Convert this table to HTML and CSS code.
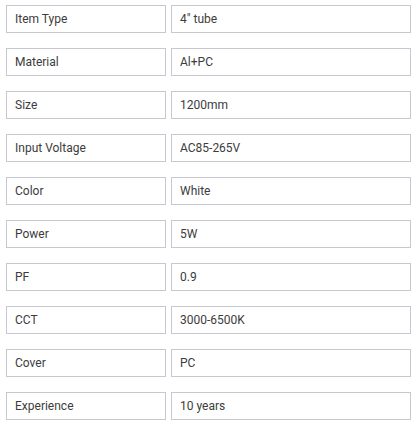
FILE: index.html
```html
<!DOCTYPE html>
<html>
<head>
<meta charset="utf-8">
<link rel="stylesheet" href="styles.css">
</head>
<body>
<div class="specs">
  <div class="cell">Item Type</div><div class="cell">4" tube</div>
  <div class="cell">Material</div><div class="cell">Al+PC</div>
  <div class="cell">Size</div><div class="cell">1200mm</div>
  <div class="cell">Input Voltage</div><div class="cell">AC85-265V</div>
  <div class="cell">Color</div><div class="cell">White</div>
  <div class="cell">Power</div><div class="cell">5W</div>
  <div class="cell">PF</div><div class="cell">0.9</div>
  <div class="cell">CCT</div><div class="cell">3000-6500K</div>
  <div class="cell">Cover</div><div class="cell">PC</div>
  <div class="cell">Experience</div><div class="cell">10 years</div>
</div>
</body>
</html>
```
FILE: styles.css
```css
html, body {
  margin: 0;
  padding: 0;
  background: #ffffff;
}
.specs {
  display: grid;
  grid-template-columns: 160px 240px;
  grid-auto-rows: 28px;
  column-gap: 5px;
  row-gap: 15px;
  padding: 5px 0 0 6px;
  font-family: Roboto, "Liberation Sans", sans-serif;
  font-size: 12px;
  color: #3c3c3c;
}
.cell {
  box-sizing: border-box;
  border: 1px solid #c8c8d0;
  display: flex;
  align-items: center;
  padding: 0 8px;
}
```
